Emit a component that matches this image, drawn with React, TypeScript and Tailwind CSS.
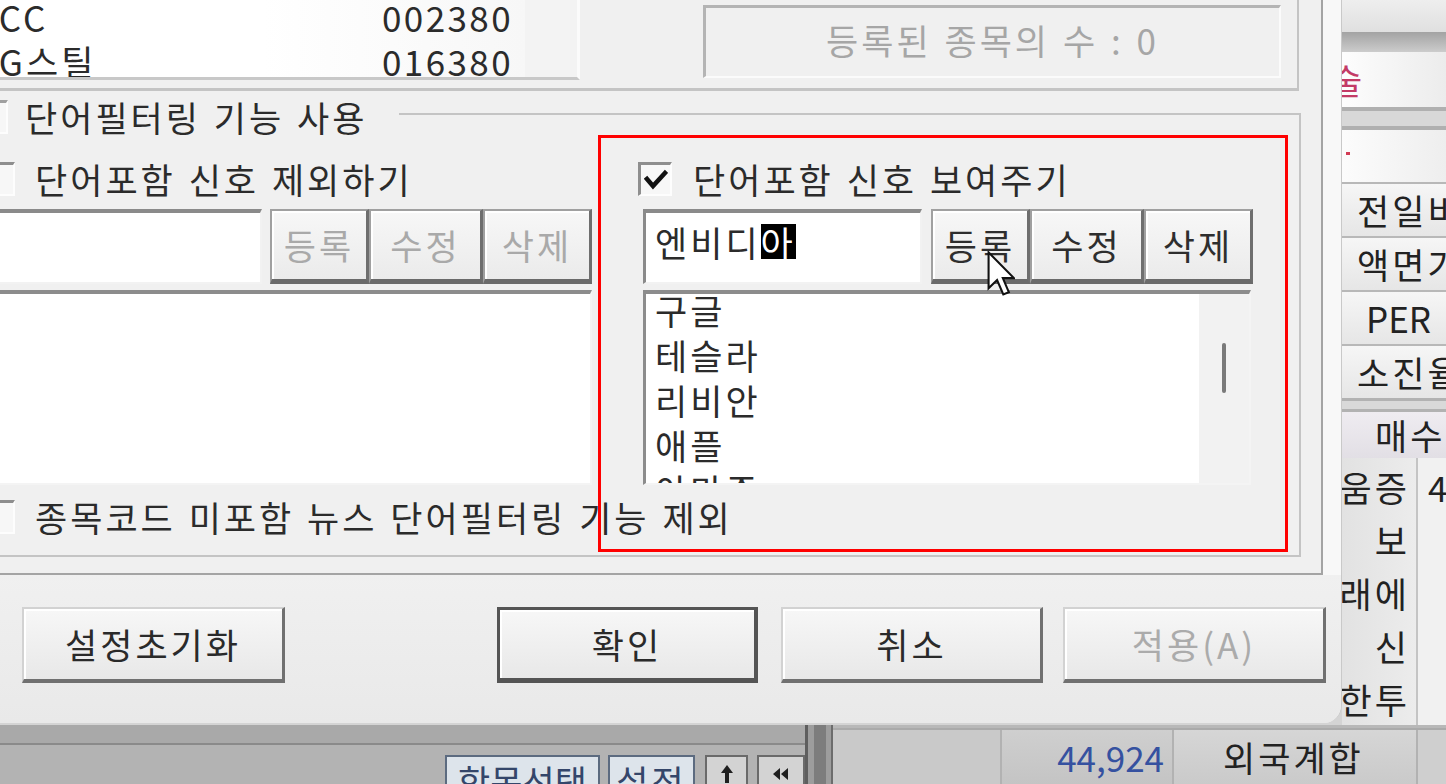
import React from "react";

function CheckBox({ checked = false, className = "" }: { checked?: boolean; className?: string }) {
  return (
    <div
      className={`shrink-0 w-[34px] h-[34px] bg-[#f7f7f7] border-t-[3px] border-l-[3px] border-t-[#8e8e8e] border-l-[#8e8e8e] border-r-2 border-b-2 border-r-[#fdfdfd] border-b-[#fdfdfd] flex items-center justify-center ${className}`}
    >
      {checked && (
        <svg width="24" height="22" viewBox="0 0 24 22">
          <path d="M3 10 L9 17 L21 4" fill="none" stroke="#111" strokeWidth="4.5" strokeLinecap="square" />
        </svg>
      )}
    </div>
  );
}

function CheckRow({
  checked = false,
  label,
  boxClass = "",
  gap = "ml-[20px]",
  className = "",
}: {
  checked?: boolean;
  label: string;
  boxClass?: string;
  gap?: string;
  className?: string;
}) {
  return (
    <div className={`flex items-center h-[40px] ${className}`}>
      <CheckBox checked={checked} className={boxClass} />
      <span className={`${gap} whitespace-nowrap`}>{label}</span>
    </div>
  );
}

function SmallBtn({ label, disabled = false, w }: { label: string; disabled?: boolean; w: string }) {
  return (
    <div
      className={`${w} h-full flex items-center justify-center bg-gradient-to-b from-[#f7f7f7] to-[#ebebeb] border-2 border-[#a0a0a0] border-r-[3px] border-r-[#6e6e6e] border-b-[5px] border-b-[#6a6a6a] shadow-[inset_2px_2px_0_#ffffff] ${
        disabled ? "text-[#a9a9a9]" : "text-[#2e2e2e]"
      }`}
    >
      {label}
    </div>
  );
}

function DlgBtn({
  label,
  w,
  disabled = false,
  def = false,
}: {
  label: string;
  w: string;
  disabled?: boolean;
  def?: boolean;
}) {
  const border = def
    ? "border-[3px] border-[#545454] border-r-[4px] border-b-[5px]"
    : "border-2 border-[#d2d2d2] border-r-[3px] border-r-[#707070] border-b-[4px] border-b-[#707070]";
  return (
    <div
      className={`${w} h-[76px] flex items-center justify-center bg-gradient-to-b from-[#f7f7f7] to-[#e8e8e8] shadow-[inset_2px_2px_0_#ffffff] ${border} ${
        disabled ? "text-[#ababab]" : "text-[#2a2a2a]"
      }`}
    >
      {label}
    </div>
  );
}

function SunkenInput({ children }: { children?: React.ReactNode }) {
  return (
    <div className="w-[280px] h-full bg-white border-t-[4px] border-l-[3px] border-t-[#8a8a8a] border-l-[#8a8a8a] border-r-2 border-b-2 border-r-[#f2f2f2] border-b-[#f2f2f2] pl-[9px] pt-[9px] whitespace-nowrap">
      {children}
    </div>
  );
}

function ListBox({ items, scroll = false }: { items: string[]; scroll?: boolean }) {
  return (
    <div className="h-[195px] flex bg-white overflow-hidden border-t-[4px] border-l-[3px] border-t-[#8c8c8c] border-l-[#8c8c8c] border-r-2 border-b-2 border-r-[#f4f4f4] border-b-[#f4f4f4]">
      <div className="flex-1 pl-[9px] -mt-[7px]">
        {items.map((t) => (
          <div key={t} className="h-[45px] flex items-center whitespace-nowrap">
            {t}
          </div>
        ))}
      </div>
      {scroll && (
        <div className="w-[50px] bg-[#f2f2f2] pt-[49px]">
          <div className="mx-auto w-[4px] h-[50px] bg-[#7a7a7a] rounded-[2px]" />
        </div>
      )}
    </div>
  );
}

function Dialog() {
  return (
    <div className="absolute left-0 top-0 w-[1342px] h-[723px] bg-[#f0f0f0] rounded-br-[18px] overflow-hidden flex flex-col border-r border-[#c9c9c9] text-[#2b2b2b]">
      <div className="flex h-[575px] shrink-0">
        <div className="w-[1323px] border-r-2 border-b-2 border-[#a4a4a4] flex flex-col">
          {/* upper group */}
          <div className="h-[91px] w-[1299px] shrink-0 border-r-2 border-b-[3px] border-[#c4c4c4] flex items-start">
            <div className="w-[580px] h-[80px] flex bg-white overflow-hidden border-r-[3px] border-b-[3px] border-r-[#fbfbfb] border-b-[#c8c8c8]">
              <div className="flex-1 -mt-[5px] bg-gradient-to-r from-[#ffffff] via-[#ffffff] to-[#f7f7f7]">
                <div className="flex h-[44px] items-center whitespace-nowrap">
                  <span className="-ml-[26px] w-[408px]">KCC</span>
                  <span className="tracking-[2.4px]">002380</span>
                </div>
                <div className="flex h-[44px] items-center whitespace-nowrap">
                  <span className="-ml-[26px] w-[408px]">KG스틸</span>
                  <span className="tracking-[2.4px]">016380</span>
                </div>
              </div>
              <div className="w-[52px] bg-[#f3f3f3]" />
            </div>
            <div className="ml-[123px] mt-[5px] w-[578px] h-[73px] pb-[4px] border-t-[3px] border-l-[3px] border-t-[#b4b4b4] border-l-[#b4b4b4] border-r-2 border-b-2 border-r-[#fbfbfb] border-b-[#fbfbfb] flex items-center justify-center text-[#a6a6a6] whitespace-nowrap">
              등록된 종목의 수 : 0
            </div>
          </div>

          {/* lower group label row */}
          <div className="flex h-[57px] w-[1301px] shrink-0">
            <div className="flex items-center mt-[6px] h-[40px] -ml-[26px]">
              <CheckBox className="border-t-[#a0a0a0] border-l-[#a0a0a0]" />
              <span className="ml-[17px] whitespace-nowrap">단어필터링 기능 사용</span>
            </div>
            <div className="flex-1 ml-[32px] mt-[22px] border-t-2 border-r-2 border-[#c4c4c4]" />
          </div>

          {/* lower group body */}
          <div className="w-[1301px] h-[409px] shrink-0 border-r-2 border-b-2 border-[#c4c4c4]">
            <div className="-ml-[18px] pt-[11px] grid grid-cols-[610px_610px] gap-x-[51px]">
              <CheckRow label="단어포함 신호 제외하기" boxClass="-ml-[1px]" />
              <CheckRow label="단어포함 신호 보여주기" checked boxClass="-ml-[5px]" gap="ml-[21px]" />

              <div className="mt-[10px] h-[75px] flex">
                <SunkenInput />
                <div className="ml-[8px] flex h-full">
                  <SmallBtn label="등록" disabled w="w-[99px]" />
                  <SmallBtn label="수정" disabled w="w-[114px]" />
                  <SmallBtn label="삭제" disabled w="w-[109px]" />
                </div>
              </div>
              <div className="mt-[10px] h-[75px] flex">
                <SunkenInput>
                  엔비디
                  <span className="inline-block h-[35px] leading-[35px] bg-black text-white">아</span>
                </SunkenInput>
                <div className="ml-[9px] flex h-full">
                  <SmallBtn label="등록" w="w-[99px]" />
                  <SmallBtn label="수정" w="w-[114px]" />
                  <SmallBtn label="삭제" w="w-[109px]" />
                </div>
              </div>

              <div className="mt-[6px]">
                <ListBox items={[]} />
              </div>
              <div className="mt-[6px] w-[608px]">
                <ListBox items={["구글", "테슬라", "리비안", "애플", "아마존"]} scroll />
              </div>

              <CheckRow
                label="종목코드 미포함 뉴스 단어필터링 기능 제외"
                boxClass="-ml-[1px]"
                className="col-span-2 mt-[12px]"
              />
            </div>
          </div>
        </div>
        <div className="flex-1 bg-[#f8f8f8]" />
      </div>

      <div className="flex-1 bg-gradient-to-b from-[#f0f0f0] to-[#e9e9e9] flex items-start pt-[32px] pl-[22px]">
        <DlgBtn label="설정초기화" w="w-[263px]" />
        <div className="ml-[212px]">
          <DlgBtn label="확인" w="w-[261px]" def />
        </div>
        <div className="ml-[23px]">
          <DlgBtn label="취소" w="w-[262px]" />
        </div>
        <div className="ml-[20px]">
          <DlgBtn label="적용(A)" w="w-[263px]" disabled />
        </div>
      </div>
    </div>
  );
}

function RightPanel() {
  const rows = [
    { t: "전일비", pl: "pl-[15px]" },
    { t: "액면가", pl: "pl-[15px]" },
    { t: "PER", pl: "pl-[24px] tracking-normal" },
    { t: "소진율", pl: "pl-[15px]" },
  ];
  const brokers = ["움증", "보", "래에", "신", "한투"];
  return (
    <div className="w-[104px] h-full flex flex-col overflow-hidden bg-[#e9e9e9] text-[#222] whitespace-nowrap">
      <div className="h-[32px] shrink-0 bg-gradient-to-b from-[#eeeeee] to-[#e0e0e0]" />
      <div className="h-[20px] shrink-0 bg-gradient-to-b from-[#a3a3a3] to-[#cccccc]" />
      <div className="h-[55px] shrink-0 flex items-center bg-gradient-to-r from-[#fdfdfd] to-[#ececec]">
        <span className="-ml-[12px] text-[#c33b66]">술</span>
      </div>
      <div className="h-[23px] shrink-0 bg-[#d8d8d8] border-y-[4px] border-[#b0b0b0]" />
      <div className="h-[52px] shrink-0 bg-gradient-to-r from-[#fcfcfc] to-[#eeeeee] pt-[22px]">
        <div className="ml-[4px] w-[4px] h-[3px] bg-[#d23c55]" />
      </div>
      {rows.map((r) => (
        <div
          key={r.t}
          className={`h-[54px] shrink-0 flex items-center border-t-2 border-[#b8b8b8] bg-gradient-to-b from-[#f6f6f6] to-[#e6e6e6] ${r.pl}`}
        >
          {r.t}
        </div>
      ))}
      <div className="h-[14px] shrink-0 bg-[#d9d9d9] border-y-[3px] border-[#b2b2b2]" />
      <div className="h-[46px] shrink-0 flex items-center pl-[33px] tracking-[3px] bg-gradient-to-b from-[#efecf1] to-[#e2dfe5]">
        매수
      </div>
      <div className="flex-1 flex">
        <div className="w-[76px] border-r-2 border-[#c4c4c4] bg-gradient-to-r from-[#e2e2e2] to-[#ececec] pt-[2px]">
          {brokers.map((b) => (
            <div key={b} className="h-[53px] flex items-center justify-end pr-[6px]">
              {b}
            </div>
          ))}
        </div>
        <div className="flex-1 bg-[#f1f1f1] pl-[10px] pt-[2px]">
          <div className="h-[53px] flex items-center">4</div>
        </div>
      </div>
    </div>
  );
}

function BottomStrip() {
  return (
    <div className="h-[59px] shrink-0 flex bg-[#b3b3b3] overflow-hidden">
      <div className="w-[805px] flex flex-col">
        <div className="h-[20px] shrink-0 bg-[#a9a9a9] border-b-2 border-[#8a8a8a]" />
        <div className="flex items-start pt-[10px] pl-[445px] whitespace-nowrap">
          <div className="w-[155px] h-[50px] bg-[#dde4eb] border-2 border-[#5c6b80] flex justify-center pt-[4px] text-[#34466a] leading-[40px] tracking-normal">
            항목선택
          </div>
          <div className="ml-[8px] w-[87px] h-[50px] bg-[#dde4eb] border-2 border-[#5c6b80] flex justify-center pt-[4px] text-[#34466a] leading-[40px]">
            설정
          </div>
          <div className="ml-[10px] w-[43px] h-[50px] bg-[#d3d3d3] border-2 border-[#6a6a6a] flex justify-center pt-[6px]">
            <svg width="16" height="20" viewBox="0 0 16 20">
              <path d="M8 2 L2 10 H6 V20 H10 V10 H14 Z" fill="#1f1f1f" />
            </svg>
          </div>
          <div className="ml-[9px] w-[48px] h-[50px] bg-[#d3d3d3] border-2 border-[#6a6a6a] flex justify-center pt-[10px]">
            <svg width="18" height="14" viewBox="0 0 18 14">
              <path d="M8 1 L1 7 L8 13 Z M16 1 L9 7 L16 13 Z" fill="#1f1f1f" />
            </svg>
          </div>
        </div>
      </div>
      <div className="w-[28px] flex bg-[#9d9d9d]">
        <div className="w-[3px] bg-[#5e5e5e]" />
        <div className="w-[6px]" />
        <div className="w-[12px] bg-[#7d7d7d]" />
        <div className="flex-1" />
        <div className="w-[2px] bg-[#6c6c6c]" />
      </div>
      <div className="flex-1 flex flex-col bg-[#c6c6c6]">
        <div className="h-[3px] shrink-0 bg-[#b8b8b8]" />
        <div className="flex-1 flex border-t-2 border-[#aaaaaa] whitespace-nowrap">
          <div className="w-[169px] border-r-2 border-[#b2b2b2] bg-[#c9c9c9]" />
          <div className="w-[172px] border-r-2 border-[#b2b2b2] flex items-center justify-end pr-[8px] text-[#3551a0] tracking-normal bg-gradient-to-b from-[#cfcfcf] to-[#c4c4c4]">
            44,924
          </div>
          <div className="w-[244px] border-r-2 border-[#b2b2b2] flex items-center pl-[49px] text-[#222] bg-gradient-to-b from-[#d6d6d6] to-[#cacaca]">
            외국계합
          </div>
          <div className="flex-1 bg-[#cfcfcf]" />
        </div>
      </div>
    </div>
  );
}

export default function App() {
  return (
    <div className="relative w-[1446px] h-[784px] overflow-hidden bg-[#c4c4c4] font-['Noto_Sans_CJK_KR','Noto_Sans',sans-serif] text-[35px] leading-[40px] tracking-[3px] [word-spacing:2px]">
      <div className="flex flex-col h-full">
        <div className="flex h-[725px] shrink-0">
          <div className="flex-1 bg-[#d4d4d4]" />
          <RightPanel />
        </div>
        <BottomStrip />
      </div>

      <Dialog />

      <div className="absolute left-[598px] top-[135px] w-[690px] h-[417px] border-[3px] border-[#ff0000] pointer-events-none" />

      <svg
        className="absolute left-[987px] top-[251px] pointer-events-none"
        width="28"
        height="46"
        viewBox="0 0 12 20"
      >
        <path
          d="M0.6 0.6 L0.6 16.2 L4.3 12.6 L7 18.9 L9.4 17.9 L6.8 11.8 L11.6 11.8 Z"
          fill="#ffffff"
          stroke="#111111"
          strokeWidth="0.9"
          strokeLinejoin="miter"
        />
      </svg>
    </div>
  );
}
